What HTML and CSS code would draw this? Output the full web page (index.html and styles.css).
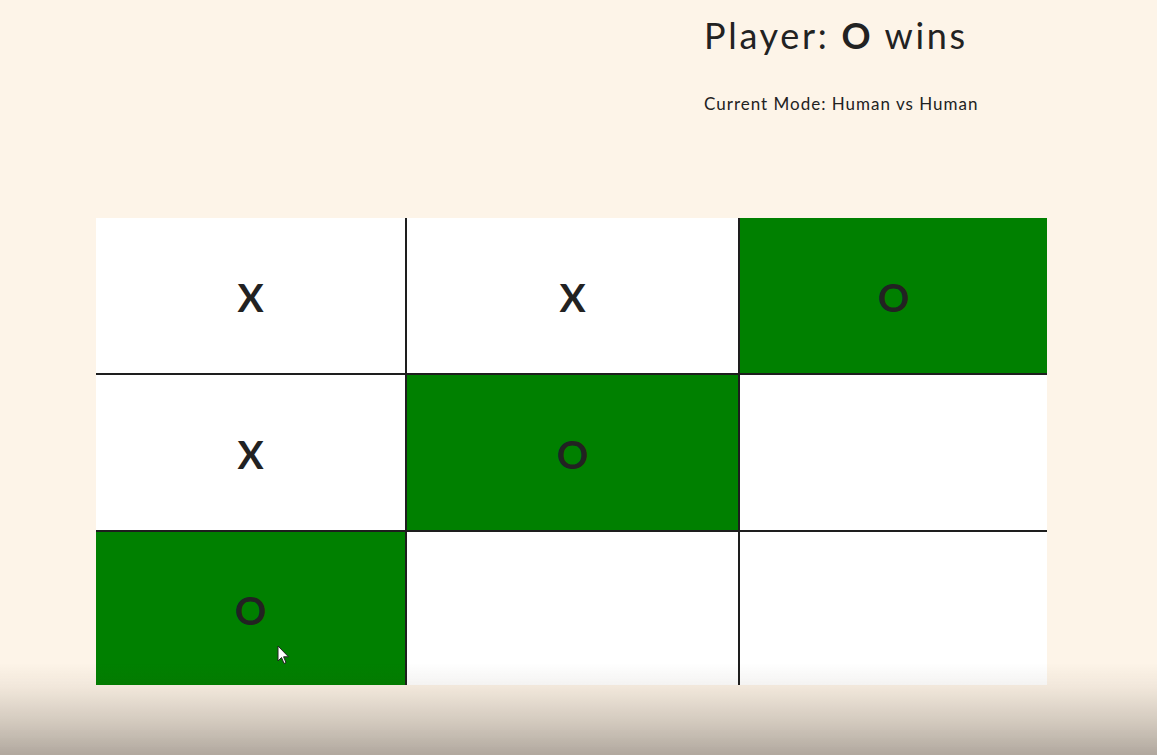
FILE: index.html
```html
<!DOCTYPE html>
<html lang="en">
<head>
<meta charset="utf-8">
<title>Tic Tac Toe</title>
<link rel="stylesheet" href="styles.css">
</head>
<body>
<header class="status">
  <h1 class="player">Player: <strong>O</strong> wins</h1>
  <p class="mode">Current Mode: Human vs Human</p>
</header>
<main class="board">
  <div class="cell">X</div>
  <div class="cell">X</div>
  <div class="cell win">O</div>
  <div class="cell">X</div>
  <div class="cell win">O</div>
  <div class="cell"></div>
  <div class="cell win">O</div>
  <div class="cell"></div>
  <div class="cell"></div>
</main>
<svg class="cursor" width="14" height="22" viewBox="0 0 14 22"><path d="M1 1 L1 16 L4.5 12.5 L7 18.5 L9 17.6 L6.6 11.8 L11.5 11.8 Z" fill="#fff" stroke="#222" stroke-width="1"/></svg>
<div class="shade"></div>
</body>
</html>
```
FILE: styles.css
```css
html, body {
  margin: 0;
  padding: 0;
}
body {
  background: #fdf4e8;
  font-family: "Lato", "Liberation Sans", sans-serif;
  color: #222;
  height: 755px;
  overflow: hidden;
}
.status {
  padding: 13px 0 0 704px;
  height: 218px;
  box-sizing: border-box;
}
.player {
  margin: 0;
  font-size: 36px;
  font-weight: 400;
  line-height: 44px;
  letter-spacing: 2.7px;
}
.player strong {
  font-weight: 700;
}
.mode {
  margin: 37px 0 0;
  font-size: 17px;
  line-height: 20px;
  letter-spacing: 1px;
}
.board {
  margin-left: 96px;
  width: 951px;
  display: grid;
  grid-template-columns: 309px 331px 307px;
  grid-template-rows: 155px 155px 153px;
  gap: 2px;
  background: #1e1e1e;
}
.cell {
  background: #fff;
  display: flex;
  align-items: center;
  justify-content: center;
  font-size: 39px;
  font-weight: 700;
  color: #222;
  padding-top: 2px;
}
.cell.win {
  background: #008000;
}
.cursor {
  position: absolute;
  left: 277px;
  top: 645px;
}
.shade {
  position: fixed;
  left: 0;
  right: 0;
  bottom: 0;
  height: 92px;
  background: linear-gradient(to bottom, rgba(60, 40, 20, 0) 0%, rgba(60, 40, 20, 0.06) 25%, rgba(40, 30, 20, 0.2) 65%, rgba(30, 20, 15, 0.34) 100%);
  pointer-events: none;
}
```
